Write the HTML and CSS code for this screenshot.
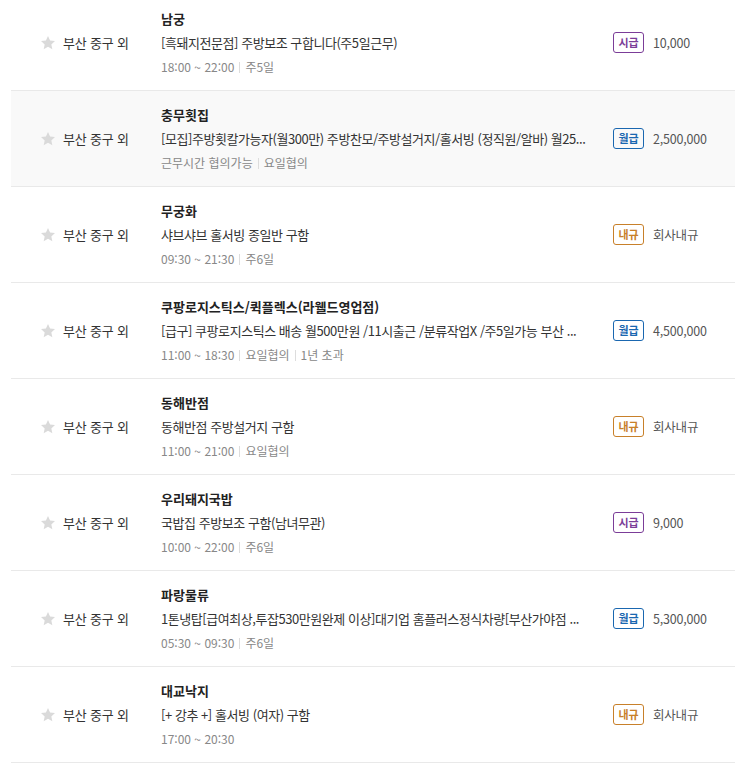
FILE: index.html
```
<!DOCTYPE html>
<html lang="ko">
<head>
    <meta charset="UTF-8">
    <meta name="viewport" content="width=device-width, initial-scale=1.0">
    <title>채용정보 목록</title>
    <link rel="stylesheet" href="styles.css">
</head>
<body>
    <ul class="job-list">
        <li class="job-row">
            <div class="job-area"><svg class="star" viewBox="0 0 24 24"><polygon points="12,1.5 15.1,8.3 22.5,9.1 17,14.1 18.5,21.5 12,17.8 5.5,21.5 7,14.1 1.5,9.1 8.9,8.3"/></svg>부산 중구 외</div>
            <div class="job-info">
                <div class="job-company">남궁</div>
                <div class="job-title">[흑돼지전문점] 주방보조 구합니다(주5일근무)</div>
                <div class="job-meta"><span>18:00 ~ 22:00</span><span>주5일</span></div>
            </div>
            <div class="job-pay"><span class="badge badge-hour">시급</span>10,000</div>
        </li>
        <li class="job-row job-row-hl">
            <div class="job-area"><svg class="star" viewBox="0 0 24 24"><polygon points="12,1.5 15.1,8.3 22.5,9.1 17,14.1 18.5,21.5 12,17.8 5.5,21.5 7,14.1 1.5,9.1 8.9,8.3"/></svg>부산 중구 외</div>
            <div class="job-info">
                <div class="job-company">충무횟집</div>
                <div class="job-title">[모집]주방횟칼가능자(월300만) 주방찬모/주방설거지/홀서빙 (정직원/알바) 월25...</div>
                <div class="job-meta"><span>근무시간 협의가능</span><span>요일협의</span></div>
            </div>
            <div class="job-pay"><span class="badge badge-month">월급</span>2,500,000</div>
        </li>
        <li class="job-row">
            <div class="job-area"><svg class="star" viewBox="0 0 24 24"><polygon points="12,1.5 15.1,8.3 22.5,9.1 17,14.1 18.5,21.5 12,17.8 5.5,21.5 7,14.1 1.5,9.1 8.9,8.3"/></svg>부산 중구 외</div>
            <div class="job-info">
                <div class="job-company">무궁화</div>
                <div class="job-title">샤브샤브 홀서빙 종일반 구함</div>
                <div class="job-meta"><span>09:30 ~ 21:30</span><span>주6일</span></div>
            </div>
            <div class="job-pay"><span class="badge badge-rule">내규</span>회사내규</div>
        </li>
        <li class="job-row">
            <div class="job-area"><svg class="star" viewBox="0 0 24 24"><polygon points="12,1.5 15.1,8.3 22.5,9.1 17,14.1 18.5,21.5 12,17.8 5.5,21.5 7,14.1 1.5,9.1 8.9,8.3"/></svg>부산 중구 외</div>
            <div class="job-info">
                <div class="job-company">쿠팡로지스틱스/퀵플렉스(라웰드영업점)</div>
                <div class="job-title">[급구] 쿠팡로지스틱스 배송 월500만원 /11시출근 /분류작업X /주5일가능 부산 ...</div>
                <div class="job-meta"><span>11:00 ~ 18:30</span><span>요일협의</span><span>1년 초과</span></div>
            </div>
            <div class="job-pay"><span class="badge badge-month">월급</span>4,500,000</div>
        </li>
        <li class="job-row">
            <div class="job-area"><svg class="star" viewBox="0 0 24 24"><polygon points="12,1.5 15.1,8.3 22.5,9.1 17,14.1 18.5,21.5 12,17.8 5.5,21.5 7,14.1 1.5,9.1 8.9,8.3"/></svg>부산 중구 외</div>
            <div class="job-info">
                <div class="job-company">동해반점</div>
                <div class="job-title">동해반점 주방설거지 구함</div>
                <div class="job-meta"><span>11:00 ~ 21:00</span><span>요일협의</span></div>
            </div>
            <div class="job-pay"><span class="badge badge-rule">내규</span>회사내규</div>
        </li>
        <li class="job-row">
            <div class="job-area"><svg class="star" viewBox="0 0 24 24"><polygon points="12,1.5 15.1,8.3 22.5,9.1 17,14.1 18.5,21.5 12,17.8 5.5,21.5 7,14.1 1.5,9.1 8.9,8.3"/></svg>부산 중구 외</div>
            <div class="job-info">
                <div class="job-company">우리돼지국밥</div>
                <div class="job-title">국밥집 주방보조 구함(남녀무관)</div>
                <div class="job-meta"><span>10:00 ~ 22:00</span><span>주6일</span></div>
            </div>
            <div class="job-pay"><span class="badge badge-hour">시급</span>9,000</div>
        </li>
        <li class="job-row">
            <div class="job-area"><svg class="star" viewBox="0 0 24 24"><polygon points="12,1.5 15.1,8.3 22.5,9.1 17,14.1 18.5,21.5 12,17.8 5.5,21.5 7,14.1 1.5,9.1 8.9,8.3"/></svg>부산 중구 외</div>
            <div class="job-info">
                <div class="job-company">파랑물류</div>
                <div class="job-title">1톤냉탑[급여최상,투잡530만원완제 이상]대기업 홈플러스정식차량[부산가야점 ...</div>
                <div class="job-meta"><span>05:30 ~ 09:30</span><span>주6일</span></div>
            </div>
            <div class="job-pay"><span class="badge badge-month">월급</span>5,300,000</div>
        </li>
        <li class="job-row">
            <div class="job-area"><svg class="star" viewBox="0 0 24 24"><polygon points="12,1.5 15.1,8.3 22.5,9.1 17,14.1 18.5,21.5 12,17.8 5.5,21.5 7,14.1 1.5,9.1 8.9,8.3"/></svg>부산 중구 외</div>
            <div class="job-info">
                <div class="job-company">대교낙지</div>
                <div class="job-title">[+ 강추 +] 홀서빙 (여자) 구함</div>
                <div class="job-meta"><span>17:00 ~ 20:30</span></div>
            </div>
            <div class="job-pay"><span class="badge badge-rule">내규</span>회사내규</div>
        </li>
    </ul>
</body>
</html>
```

FILE: styles.css
```
body {
    margin: 0;
    background: #fff;
    font-family: "Noto Sans CJK KR", "Noto Sans", sans-serif;
    color: #333;
    overflow: hidden;
}

.job-list {
    list-style: none;
    margin: -5px 0 0 11px;
    padding: 0;
}

.job-row {
    display: flex;
    align-items: center;
    height: 95px;
    border-bottom: 1px solid #e9e9e9;
}

.job-row-hl {
    background: #f9f9f9;
}

.job-area {
    display: flex;
    align-items: center;
    gap: 7px;
    width: 121px;
    padding-left: 29px;
    font-size: 13px;
    color: #333;
    letter-spacing: -0.2px;
}

.star {
    width: 16px;
    height: 16px;
    fill: #dadada;
}

.job-info {
    flex: 1;
    min-width: 0;
    padding-right: 12px;
    display: flex;
    flex-direction: column;
    gap: 4px;
}

.job-company,
.job-title,
.job-meta {
    line-height: 20px;
    white-space: nowrap;
}

.job-company {
    font-size: 13px;
    font-weight: bold;
    color: #222;
}

.job-title {
    font-size: 13px;
    color: #333;
    letter-spacing: -0.45px;
}

.job-meta {
    font-size: 12px;
    color: #888;
}

.job-meta span + span::before {
    content: "";
    display: inline-block;
    width: 1px;
    height: 11px;
    background: #ddd;
    margin: 0 5px;
    vertical-align: -1px;
}

.job-pay {
    width: 122px;
    display: flex;
    align-items: center;
    gap: 9px;
    font-size: 12.5px;
    color: #555;
    letter-spacing: -0.2px;
}

.badge {
    box-sizing: border-box;
    width: 31px;
    height: 21px;
    border: 1px solid;
    border-radius: 3px;
    font-size: 11px;
    font-weight: bold;
    line-height: 19px;
    text-align: center;
    letter-spacing: 0;
}

.badge-hour {
    color: #7b3d98;
    border-color: #7b3d98;
}

.badge-month {
    color: #1a67b0;
    border-color: #1a67b0;
}

.badge-rule {
    color: #c8802a;
    border-color: #c8802a;
}
```
